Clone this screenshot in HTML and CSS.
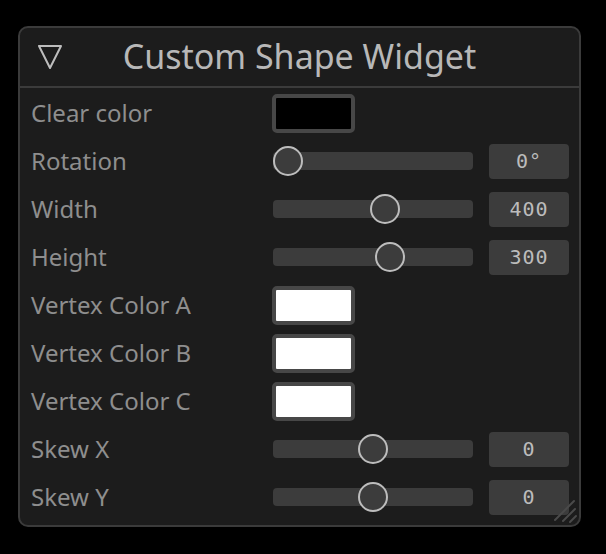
FILE: index.html
```html
<!DOCTYPE html>
<html>
<head>
<meta charset="utf-8">
<link rel="stylesheet" href="styles.css">
</head>
<body>
<div class="panel">
  <div class="header">
    <svg class="tri" width="26" height="26" viewBox="0 0 26 26"><polygon points="2,2 24,2 13,24" fill="none" stroke="#bdbdbd" stroke-width="2" stroke-linejoin="round"/></svg>
    <div class="title">Custom Shape Widget</div>
    <div></div>
  </div>
  <div class="rows">
    <div class="row"><div class="label">Clear color</div><div class="swatch black"></div></div>
    <div class="row"><div class="label">Rotation</div><div class="slider"><div class="track"><div class="knob" style="left:0px"></div></div><div class="value">0°</div></div></div>
    <div class="row"><div class="label">Width</div><div class="slider"><div class="track"><div class="knob" style="left:97px"></div></div><div class="value">400</div></div></div>
    <div class="row"><div class="label">Height</div><div class="slider"><div class="track"><div class="knob" style="left:102px"></div></div><div class="value">300</div></div></div>
    <div class="row"><div class="label">Vertex Color A</div><div class="swatch white"></div></div>
    <div class="row"><div class="label">Vertex Color B</div><div class="swatch white"></div></div>
    <div class="row"><div class="label">Vertex Color C</div><div class="swatch white"></div></div>
    <div class="row"><div class="label">Skew X</div><div class="slider"><div class="track"><div class="knob" style="left:85px"></div></div><div class="value">0</div></div></div>
    <div class="row"><div class="label">Skew Y</div><div class="slider"><div class="track"><div class="knob" style="left:85px"></div></div><div class="value">0</div></div></div>
  </div>
  <svg class="grip" width="26" height="26" viewBox="0 0 26 26"><g stroke="#4a4a4a" stroke-width="2" stroke-linecap="round"><line x1="3" y1="22" x2="22" y2="3"/><line x1="11" y1="23" x2="23" y2="11"/><line x1="18" y1="24" x2="24" y2="18"/></g></svg>
</div>
</body>
</html>
```
FILE: styles.css
```css
html, body {
  margin: 0;
  padding: 0;
  background: #000;
}
body {
  padding: 26px 0 0 18px;
  font-family: "Noto Sans", "Open Sans", sans-serif;
}
.panel {
  position: relative;
  box-sizing: border-box;
  width: 563px;
  height: 501px;
  background: #1c1c1c;
  border: 2px solid #3b3b3b;
  border-radius: 10px;
}
.header {
  display: grid;
  grid-template-columns: 1fr auto 1fr;
  align-items: center;
  height: 58px;
  border-bottom: 2px solid #3b3b3b;
}
.tri {
  margin-left: 17px;
  display: block;
}
.title {
  color: #b8b8b8;
  font-size: 34px;
  line-height: 1;
  padding-bottom: 2px;
}
.rows {
  padding-top: 1px;
}
.row {
  display: flex;
  align-items: center;
  height: 48px;
}
.label {
  width: 252px;
  padding: 0 0 2px 11px;
  box-sizing: border-box;
  color: #8e8e8e;
  font-size: 24px;
  flex: none;
}
.swatch {
  box-sizing: border-box;
  width: 83px;
  height: 39px;
  border: 4px solid #474747;
  border-radius: 5px;
}
.swatch.black { background: #000; }
.swatch.white { background: #fff; }
.slider {
  display: flex;
  align-items: center;
  gap: 16px;
  margin-left: 1px;
}
.track {
  position: relative;
  width: 200px;
  height: 18px;
  background: #3c3c3c;
  border-radius: 4px;
}
.knob {
  position: absolute;
  top: -6px;
  box-sizing: border-box;
  width: 30px;
  height: 30px;
  border-radius: 50%;
  border: 2px solid #bdbdbd;
  background: #3c3c3c;
}
.value {
  width: 80px;
  height: 35px;
  background: #3c3c3c;
  border-radius: 4px;
  color: #bcbcbc;
  font-family: "DejaVu Sans Mono", monospace;
  font-size: 20px;
  letter-spacing: 1px;
  display: flex;
  align-items: center;
  justify-content: center;
}
.grip {
  position: absolute;
  right: 1px;
  bottom: 1px;
}
```
